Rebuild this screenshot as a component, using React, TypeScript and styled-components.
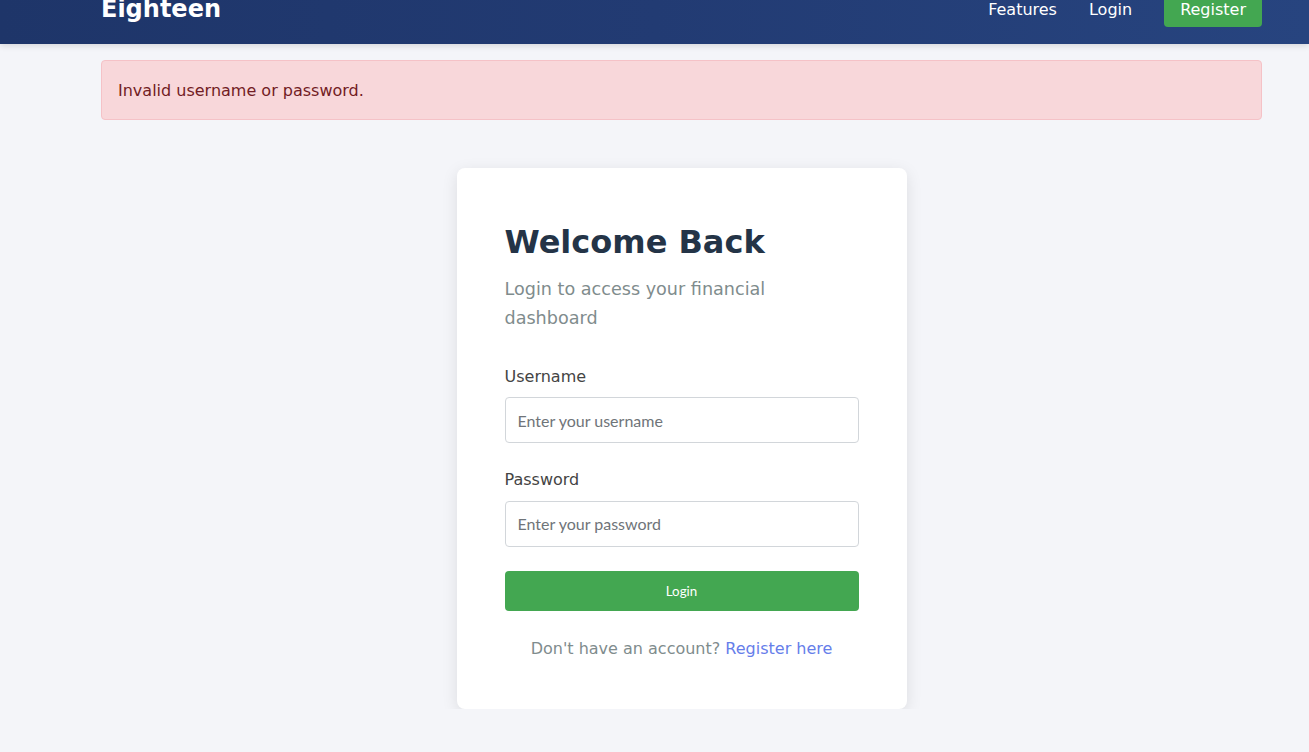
import React from "react";
import styled, { createGlobalStyle } from "styled-components";

const GlobalStyle = createGlobalStyle`
  * { box-sizing: border-box; }
  html, body { margin: 0; padding: 0; }
  body {
    background: #f4f5f9;
    font-family: "DejaVu Sans", sans-serif;
    line-height: 1.6;
    color: #333;
    overflow: hidden;
  }
`;

const Page = styled.div`
  margin-top: -24px;
`;

const Header = styled.header`
  background: linear-gradient(90deg, #1e3569 0%, #223b73 50%, #27447f 100%);
  box-shadow: 0 2px 6px rgba(0, 0, 0, 0.12);
  padding: 16px 0 17px;
`;

const Container = styled.div`
  margin: 0 47px 0 101px;
`;

const NavBar = styled(Container)`
  display: flex;
  align-items: center;
  justify-content: space-between;
`;

const Logo = styled.div`
  color: #fff;
  font-size: 24px;
  font-weight: 700;
  line-height: 1.2;
`;

const NavLinks = styled.nav`
  display: flex;
  align-items: center;
  gap: 32px;
`;

const NavLink = styled.a`
  color: #fff;
  text-decoration: none;
  font-size: 16px;
  line-height: normal;
`;

const NavButton = styled.a`
  background: #43a751;
  color: #fff;
  text-decoration: none;
  font-size: 16px;
  line-height: normal;
  padding: 8px 16px;
  border-radius: 4px;
`;

const Alert = styled.div`
  margin-top: 16px;
  background: #f8d7da;
  border: 1px solid #f5c2c7;
  border-radius: 4px;
  color: #721c24;
  padding: 17px 16px 15px;
  font-size: 16px;
`;

const Main = styled.main`
  display: flex;
  justify-content: center;
  padding-top: 48px;
`;

const Card = styled.div`
  width: 450px;
  background: #fff;
  border-radius: 8px;
  box-shadow: 0 4px 16px rgba(0, 0, 0, 0.1);
  padding: 49px 48px 47px;
`;

const Title = styled.h1`
  margin: 0 0 7px;
  font-size: 32px;
  line-height: 1.6;
  color: #243447;
  font-weight: 700;
`;

const Subtitle = styled.p`
  margin: 0 0 31px;
  font-size: 17.6px;
  line-height: 29px;
  color: #7f8c8d;
`;

const Field = styled.div`
  margin-bottom: 24px;
`;

const Label = styled.label`
  display: block;
  margin-bottom: 8px;
  font-size: 16px;
  color: #444;
`;

const Input = styled.input`
  display: block;
  width: 100%;
  height: 46px;
  padding: 0 12px;
  border: 1px solid #d2d6da;
  border-radius: 4px;
  font-family: Lato, sans-serif;
  font-size: 16px;
  color: #333;
  background: #fff;
  &::placeholder { color: #6f7479; }
`;

const SubmitButton = styled.button`
  display: block;
  width: 100%;
  height: 40px;
  border: none;
  border-radius: 4px;
  background: #43a751;
  color: #fff;
  font-family: Lato, sans-serif;
  font-size: 13.33px;
  cursor: pointer;
`;

const FooterText = styled.p`
  margin: 25px 0 0;
  text-align: center;
  font-size: 16px;
  color: #7f8c8d;
`;

const InlineLink = styled.a`
  color: #667eea;
  text-decoration: none;
`;

export default function App() {
  return (
    <>
      <GlobalStyle />
      <Page>
        <Header>
          <NavBar>
            <Logo>Eighteen</Logo>
            <NavLinks>
              <NavLink href="#">Features</NavLink>
              <NavLink href="#">Login</NavLink>
              <NavButton href="#">Register</NavButton>
            </NavLinks>
          </NavBar>
        </Header>
        <Container>
          <Alert>Invalid username or password.</Alert>
          <Main>
            <Card>
              <Title>Welcome Back</Title>
              <Subtitle>Login to access your financial dashboard</Subtitle>
              <form onSubmit={(e) => e.preventDefault()}>
                <Field>
                  <Label htmlFor="username">Username</Label>
                  <Input id="username" type="text" placeholder="Enter your username" />
                </Field>
                <Field>
                  <Label htmlFor="password">Password</Label>
                  <Input id="password" type="password" placeholder="Enter your password" />
                </Field>
                <SubmitButton type="submit">Login</SubmitButton>
              </form>
              <FooterText>
                Don't have an account? <InlineLink href="#">Register here</InlineLink>
              </FooterText>
            </Card>
          </Main>
        </Container>
      </Page>
    </>
  );
}
